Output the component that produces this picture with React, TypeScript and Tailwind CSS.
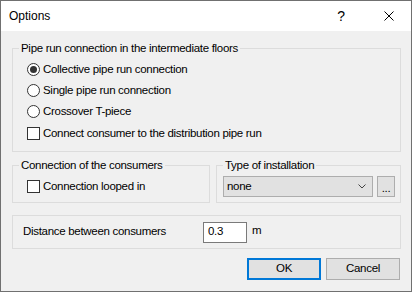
import React from "react";

const font = { fontFamily: '"Liberation Sans", Arial, sans-serif' };

function Radio({ checked, label }: { checked?: boolean; label: string }) {
  return (
    <div className="flex h-[21px] items-center">
      <span className="flex h-[13px] w-[13px] items-center justify-center rounded-full border border-[#333333] bg-white">
        {checked && <span className="h-[7px] w-[7px] rounded-full bg-[#333333]" />}
      </span>
      <span className="ml-[3px]">{label}</span>
    </div>
  );
}

function Check({ label }: { label: string }) {
  return (
    <div className="flex h-[21px] items-center">
      <span className="h-[13px] w-[13px] border border-[#333333] bg-white" />
      <span className="ml-[3px]">{label}</span>
    </div>
  );
}

export default function App() {
  return (
    <div
      className="flex h-[292px] w-[412px] flex-col border border-[#707070] bg-[#f0f0f0] text-[11.5px] tracking-[-0.3px] text-black"
      style={font}
    >
      {/* title bar */}
      <div className="flex h-[30px] items-center bg-white pl-[8px]">
        <span className="text-[12px] tracking-[0px]">Options</span>
        <span className="ml-auto mr-[39px] text-[14px] tracking-[0px]">?</span>
        <svg width="10" height="10" viewBox="0 0 10 10" className="mr-[17px]">
          <path d="M0.5 0.5 L9.5 9.5 M9.5 0.5 L0.5 9.5" stroke="#000" strokeWidth="1" />
        </svg>
      </div>

      {/* body */}
      <div className="flex flex-col pl-[11px] pr-[10px]">
        <fieldset className="mt-[10px] h-[111px] border border-[#dcdcdc] pl-[14px]">
          <legend className="ml-[-8px] px-[2px] leading-[14px]">
            Pipe run connection in the intermediate floors
          </legend>
          <div className="mt-[4px] flex flex-col">
            <Radio checked label="Collective pipe run connection" />
            <Radio label="Single pipe run connection" />
            <Radio label="Crossover T-piece" />
            <div className="mt-[1px]">
              <Check label="Connect consumer to the distribution pipe run" />
            </div>
          </div>
        </fieldset>

        <div className="mt-[6px] flex gap-[6px]">
          <fieldset className="h-[45px] w-[198px] border border-[#dcdcdc] pl-[14px]">
            <legend className="ml-[-8px] px-[2px] leading-[14px]">Connection of the consumers</legend>
            <div className="mt-[4px]">
              <Check label="Connection looped in" />
            </div>
          </fieldset>
          <fieldset className="h-[45px] flex-1 border border-[#dcdcdc] pl-[6px]">
            <legend className="ml-[0px] px-[2px] leading-[14px]">Type of installation</legend>
            <div className="mt-[4px] flex gap-[4px]">
              <div className="flex h-[21px] w-[150px] items-center border border-[#adadad] bg-[#e1e1e1] pl-[3px] pr-[6px]">
                <span>none</span>
                <svg width="8" height="5" viewBox="0 0 8 5" className="ml-auto">
                  <path d="M0.5 0.5 L4 4 L7.5 0.5" stroke="#444" strokeWidth="1" fill="none" />
                </svg>
              </div>
              <div className="flex h-[21px] w-[18px] items-end justify-center border border-[#adadad] bg-[#e1e1e1] pb-[3px] leading-[10px]">
                ...
              </div>
            </div>
          </fieldset>
        </div>

        <div className="mt-[12px] flex h-[34px] items-center border border-[#dcdcdc] pl-[10px]">
          <span className="w-[180px]">Distance between consumers</span>
          <div className="flex h-[21px] w-[44px] items-center border border-[#7a7a7a] bg-white pl-[4px]">0.3</div>
          <span className="ml-[5px] mt-[-3px]">m</span>
        </div>

        <div className="mt-[9px] flex justify-end gap-[5px] pr-[1px]">
          <button className="flex h-[22px] w-[74px] items-center justify-center border-2 border-[#0078d7] bg-[#e1e1e1]">
            OK
          </button>
          <button className="flex h-[22px] w-[74px] items-center justify-center border border-[#adadad] bg-[#e1e1e1]">
            Cancel
          </button>
        </div>
      </div>
    </div>
  );
}
